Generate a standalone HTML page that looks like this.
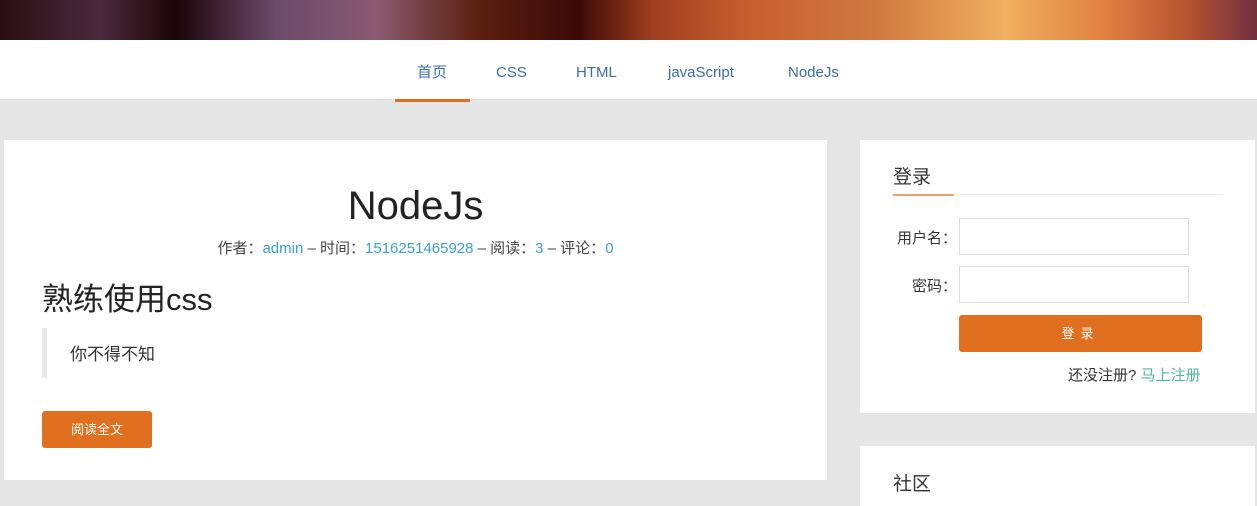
<!DOCTYPE html>
<html><head><meta charset="utf-8"><style>
*{margin:0;padding:0;box-sizing:border-box}
body{width:1257px;height:500px;overflow:hidden;background:#e6e6e6;font-family:"Liberation Sans","Noto Sans CJK SC",sans-serif;color:#333;position:relative}
.hdr{position:absolute;left:0;top:0;width:1257px;height:40px;background:linear-gradient(90deg,#2a0d14 0%,#4a2a3a 8%,#1a0508 14%,#6b4a6a 22%,#8a5a70 30%,#5a2010 38%,#3a0a08 46%,#a04020 52%,#c86030 60%,#d07a40 70%,#f0b060 80%,#e08040 88%,#b05030 95%,#703040 100%)}
.nav{position:absolute;left:0;top:40px;width:1257px;height:60px;background:#fff;border-bottom:1px solid #ddd}
.nav a{position:absolute;top:25px;font-size:15px;line-height:16px;height:16px;color:#3a6ea5;text-decoration:none}
.ul{position:absolute;left:395px;top:99px;width:75px;height:3px;background:#e07020}
.p1{position:absolute;left:4px;top:140px;width:823px;height:340px;background:#fff}
.p2{position:absolute;left:860px;top:140px;width:395px;height:273px;background:#fff}
.p3{position:absolute;left:860px;top:446px;width:395px;height:60px;background:#fff}
.abs{position:absolute;white-space:nowrap;line-height:1}
.lnk{color:#3aa0cc}
input{position:absolute;border:1px solid #ddd;background:#fff}
</style></head><body>
<div class="hdr"></div>
<div class="nav">
<a style="left:417px">首页</a><a style="left:496px">CSS</a><a style="left:576px">HTML</a><a style="left:668px">javaScript</a><a style="left:788px">NodeJs</a>
</div>
<div class="ul"></div>
<div class="p1">
<div class="abs" style="left:0;width:823px;text-align:center;top:46px;font-size:40px;color:#222">NodeJs</div>
<div class="abs" style="left:0;width:823px;text-align:center;top:101px;font-size:15px;color:#444">作者：<span class="lnk">admin</span> – 时间：<span class="lnk">1516251465928</span> – 阅读：<span class="lnk">3</span> – 评论：<span class="lnk">0</span></div>
<div class="abs" style="left:38px;top:144px;font-size:31px;color:#222">熟练使用css</div>
<div class="abs" style="left:38px;top:188px;width:5px;height:50px;background:#e8e8e8"></div>
<div class="abs" style="left:66px;top:206px;font-size:17px;color:#333">你不得不知</div>
<div class="abs" style="left:38px;top:271px;width:110px;height:37px;background:#e07020;border-radius:3px;color:#fff;font-size:13px;text-align:center;line-height:37px">阅读全文</div>
</div>
<div class="p2">
<div class="abs" style="left:33px;top:28px;font-size:19px;color:#333">登录</div>
<div class="abs" style="left:33px;top:54px;width:330px;height:1px;background:#eee"></div>
<div class="abs" style="left:33px;top:54px;width:61px;height:2px;background:#e8a070"></div>
<div class="abs" style="left:37px;top:91px;font-size:15px">用户名：</div>
<input style="left:99px;top:78px;width:230px;height:37px">
<div class="abs" style="left:52px;top:139px;font-size:15px">密码：</div>
<input style="left:99px;top:126px;width:230px;height:37px">
<div class="abs" style="left:99px;top:175px;width:243px;height:37px;background:#e07020;border-radius:3px;color:#fff;font-size:13px;text-align:center;line-height:37px;letter-spacing:6px">登录</div>
<div class="abs" style="left:208px;top:228px;font-size:15px">还没注册? <span style="color:#4fb89a">马上注册</span></div>
</div>
<div class="p3"><div class="abs" style="left:33px;top:29px;font-size:19px">社区</div></div>
</body></html>
